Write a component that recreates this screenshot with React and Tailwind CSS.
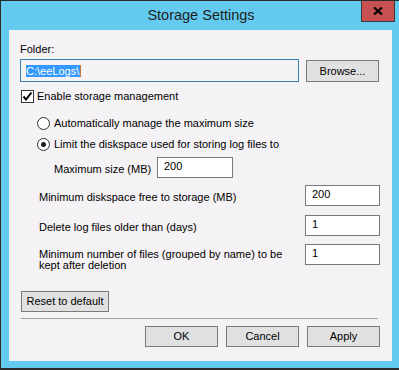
import React from 'react';

const Button = ({ children, className = '' }) => (
  <div
    className={`h-[21px] flex items-center justify-center bg-[#e1e1e1] border border-[#7a7a7a] text-[11px] leading-[13px] text-black ${className}`}
  >
    {children}
  </div>
);

const Field = ({ value, className = '' }) => (
  <div
    className={`h-[21px] bg-white border border-[#7a7a7a] pl-[6px] pt-[2px] text-[11px] leading-[13px] text-black ${className}`}
  >
    {value}
  </div>
);

const Radio = ({ checked, label }) => (
  <div className="flex items-center h-[13px] ml-[17px]">
    <div className="w-[13px] h-[13px] rounded-full border border-[#333] bg-white flex items-center justify-center">
      {checked && <div className="w-[5px] h-[5px] rounded-full bg-[#1e1e1e]" />}
    </div>
    <span className="ml-[4px]">{label}</span>
  </div>
);

export default function App() {
  return (
    <div className="w-[399px] h-[370px] bg-[#63cbef] border-l border-t border-b-2 border-[#2b2b2b] flex flex-col font-['Liberation_Sans',Arial,sans-serif] text-black overflow-hidden">
      {/* Title bar */}
      <div className="relative h-[29px] flex items-center justify-center">
        <span className="text-[14.5px] text-[#1e1e1e] pl-[2px]">Storage Settings</span>
        <div className="absolute right-[4px] top-[-1px] w-[34px] h-[22px] bg-[#c75050] border border-[#3a3a3a] flex items-center justify-center">
          <svg width="10" height="8" viewBox="0 0 10 8">
            <path d="M1 0.5 L9 7.5 M9 0.5 L1 7.5" stroke="#000" strokeWidth="2.2" />
          </svg>
        </div>
      </div>

      {/* Client area */}
      <div className="ml-[8px] mr-[7px] h-[331px] bg-[#f5f2f5] flex flex-col pl-[11px] pr-[12px] pt-[13px] text-[11px] leading-[13px]">
        <div>Folder:</div>

        <div className="flex items-end mt-[3px]">
          <div className="w-[279px] h-[23px] border border-[#3c7fb1] flex items-center pl-[5px]">
            <span className="bg-[#3399ff] text-white leading-[12px] pr-[1px]">C:\eeLogs\</span>
            <span className="w-[1px] h-[12px] bg-[#c8793a]" />
          </div>
          <Button className="ml-[7px] w-[73px] h-[22px]">Browse...</Button>
        </div>

        <div className="flex items-center h-[13px] mt-[8px] ml-[1px]">
          <div className="w-[13px] h-[13px] border border-[#333] bg-white flex items-center justify-center">
            <svg width="11" height="11" viewBox="0 0 11 11">
              <path d="M1.5 5.5 L4 8.5 L9.5 1.5" stroke="#000" strokeWidth="2" fill="none" />
            </svg>
          </div>
          <span className="ml-[3px]">Enable storage management</span>
        </div>

        <div className="mt-[14px]">
          <Radio label="Automatically manage the maximum size" />
        </div>
        <div className="mt-[8px]">
          <Radio checked label="Limit the diskspace used for storing log files to" />
        </div>

        <div className="flex items-start mt-[6px] ml-[34px]">
          <span className="w-[103px] pt-[6px]">Maximum size (MB)</span>
          <Field value="200" className="w-[76px]" />
        </div>

        <div className="flex items-start justify-between mt-[7px] ml-[19px]">
          <span className="pt-[6px]">Minimum diskspace free to storage (MB)</span>
          <Field value="200" className="w-[75px]" />
        </div>

        <div className="flex items-start justify-between mt-[9px] ml-[19px]">
          <span className="pt-[6px]">Delete log files older than (days)</span>
          <Field value="1" className="w-[75px]" />
        </div>

        <div className="flex items-start justify-between mt-[8px] ml-[19px] h-[27px]">
          <span className="pt-[5px] leading-[11px]">
            Minimum number of files (grouped by name) to be
            <br />
            kept after deletion
          </span>
          <Field value="1" className="w-[75px]" />
        </div>

        <div className="mt-[20px] ml-[1px]">
          <Button className="w-[88px]">Reset to default</Button>
        </div>

        <div className="mt-[6px] ml-[1px] mr-[2px] h-[1px] bg-[#a0a0a0]" />

        <div className="flex justify-end gap-[8px] mt-[7px]">
          <Button className="w-[73px]">OK</Button>
          <Button className="w-[73px]">Cancel</Button>
          <Button className="w-[73px]">Apply</Button>
        </div>
      </div>
    </div>
  );
}
